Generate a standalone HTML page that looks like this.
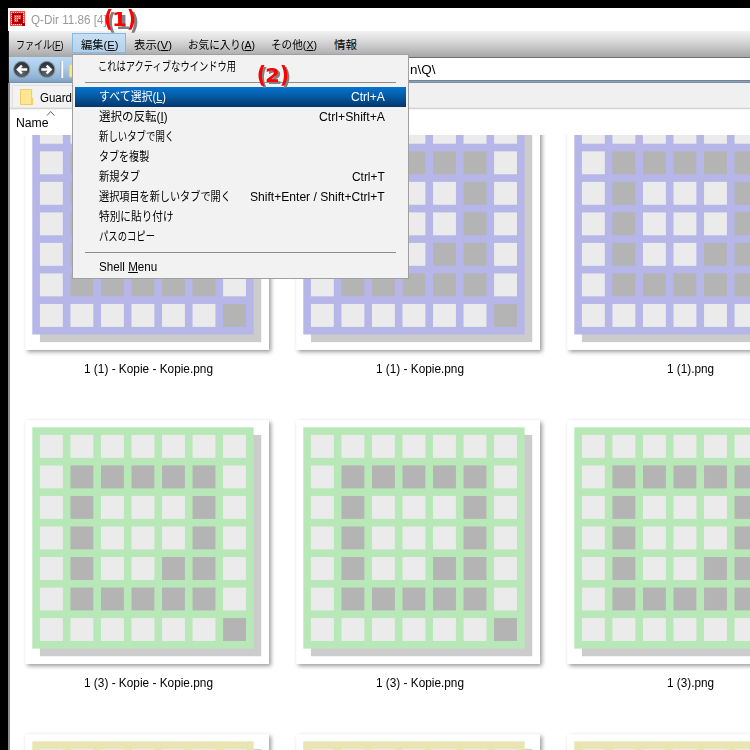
<!DOCTYPE html>
<html lang="ja"><head><meta charset="utf-8"><title>Q-Dir</title>
<style>
html,body{margin:0;padding:0}
body{width:750px;height:750px;overflow:hidden;background:#fff;position:relative;font-family:"Liberation Sans", "Noto Sans CJK JP", sans-serif;font-size:12px}
.a{position:absolute}
.t{position:absolute;white-space:nowrap;line-height:16px;height:16px;transform-origin:0 50%;display:block}
.t u{text-decoration:underline;text-underline-offset:1px}
.fr{position:absolute;width:243.3px;height:243.6px;background:#fff;border-left:1px solid #f0f0f0;border-top:1px solid #f0f0f0;box-shadow:1.5px 1.5px 2.5px rgba(0,0,0,.42)}
.th{position:absolute}
.big .p{display:inline-block;transform:scale(1.08,1.2);transform-origin:50% 62%}
.big .d{display:inline-block;transform:scale(1.13,1.04);transform-origin:50% 75%}
.big{position:absolute;letter-spacing:.6px;font-family:"DejaVu Sans","Liberation Sans",sans-serif;font-weight:bold;font-size:19px;line-height:24px;white-space:nowrap;color:#f00;text-shadow:3px 3px 0 #808080}
</style></head><body>
<!-- title bar -->
<div class="a" style="left:8px;top:8px;width:742px;height:23px;background:#fff"></div>
<svg style="position:absolute;left:10px;top:11px" width="16" height="16" viewBox="0 0 16 16" shape-rendering="crispEdges"><rect x="0" y="0" width="15" height="15" fill="#ff4646"/><rect x="2" y="2" width="11" height="11" fill="#b00000"/><rect x="4" y="4" width="7" height="7" fill="#ff4646"/><rect x="8" y="8" width="3" height="3" fill="#b00000"/><rect x="12" y="12" width="3" height="3" fill="#b00000"/><rect x="1" y="1" width="1" height="1" fill="#fff"/><rect x="3" y="1" width="1" height="1" fill="#fff"/><rect x="5" y="1" width="1" height="1" fill="#fff"/><rect x="7" y="1" width="1" height="1" fill="#fff"/><rect x="9" y="1" width="1" height="1" fill="#fff"/><rect x="11" y="1" width="1" height="1" fill="#fff"/><rect x="13" y="1" width="1" height="1" fill="#fff"/><rect x="1" y="3" width="1" height="1" fill="#fff"/><rect x="3" y="3" width="1" height="1" fill="#000"/><rect x="5" y="3" width="1" height="1" fill="#000"/><rect x="7" y="3" width="1" height="1" fill="#000"/><rect x="9" y="3" width="1" height="1" fill="#000"/><rect x="11" y="3" width="1" height="1" fill="#000"/><rect x="13" y="3" width="1" height="1" fill="#fff"/><rect x="1" y="5" width="1" height="1" fill="#fff"/><rect x="3" y="5" width="1" height="1" fill="#000"/><rect x="5" y="5" width="1" height="1" fill="#fff"/><rect x="7" y="5" width="1" height="1" fill="#fff"/><rect x="9" y="5" width="1" height="1" fill="#fff"/><rect x="11" y="5" width="1" height="1" fill="#000"/><rect x="13" y="5" width="1" height="1" fill="#fff"/><rect x="1" y="7" width="1" height="1" fill="#fff"/><rect x="3" y="7" width="1" height="1" fill="#000"/><rect x="5" y="7" width="1" height="1" fill="#fff"/><rect x="7" y="7" width="1" height="1" fill="#fff"/><rect x="9" y="7" width="1" height="1" fill="#fff"/><rect x="11" y="7" width="1" height="1" fill="#000"/><rect x="13" y="7" width="1" height="1" fill="#fff"/><rect x="1" y="9" width="1" height="1" fill="#fff"/><rect x="3" y="9" width="1" height="1" fill="#000"/><rect x="5" y="9" width="1" height="1" fill="#fff"/><rect x="7" y="9" width="1" height="1" fill="#fff"/><rect x="9" y="9" width="1" height="1" fill="#000"/><rect x="11" y="9" width="1" height="1" fill="#000"/><rect x="13" y="9" width="1" height="1" fill="#fff"/><rect x="1" y="11" width="1" height="1" fill="#fff"/><rect x="3" y="11" width="1" height="1" fill="#000"/><rect x="5" y="11" width="1" height="1" fill="#000"/><rect x="7" y="11" width="1" height="1" fill="#000"/><rect x="9" y="11" width="1" height="1" fill="#000"/><rect x="11" y="11" width="1" height="1" fill="#000"/><rect x="13" y="11" width="1" height="1" fill="#fff"/><rect x="1" y="13" width="1" height="1" fill="#fff"/><rect x="3" y="13" width="1" height="1" fill="#fff"/><rect x="5" y="13" width="1" height="1" fill="#fff"/><rect x="7" y="13" width="1" height="1" fill="#fff"/><rect x="9" y="13" width="1" height="1" fill="#fff"/><rect x="11" y="13" width="1" height="1" fill="#fff"/><rect x="13" y="13" width="1" height="1" fill="#000"/></svg>
<!-- menubar -->
<div class="a" style="left:8px;top:31px;width:742px;height:26px;background:linear-gradient(#f1f1f1 0%,#e0e0e0 28%,#c6c6c6 62%,#a6a6a6 100%)"></div>
<div class="a" style="left:72px;top:33px;width:52px;height:18px;border:1px solid #84b8e8;background:linear-gradient(#c8e0f4,#b4d0ea)"></div>
<!-- toolbar -->
<div class="a" style="left:8px;top:57px;width:742px;height:25.5px;background:linear-gradient(#badaf5 0%,#a9cceb 40%,#8fb3d6 80%,#7f9fbf 96%,#76889c 100%)"></div>
<svg class="a" style="left:9px;top:57px" width="64" height="26" viewBox="0 0 64 26">
 <defs><radialGradient id="bg" cx="50%" cy="75%" r="75%"><stop offset="0" stop-color="#626a72"/><stop offset=".6" stop-color="#3c4248"/><stop offset="1" stop-color="#262b30"/></radialGradient></defs>
 <circle cx="12.7" cy="12.5" r="8.1" fill="url(#bg)" stroke="#88949e" stroke-width="1.1"/>
 <path d="M12.9 8.6 L8.8 12.5 L12.9 16.4 M9.2 12.5 H18.2" fill="none" stroke="#fff" stroke-width="2.3" stroke-linejoin="miter"/>
 <circle cx="37.8" cy="12.5" r="8.1" fill="url(#bg)" stroke="#88949e" stroke-width="1.1"/>
 <path d="M37.6 8.6 L41.7 12.5 L37.6 16.4 M41.3 12.5 H32.3" fill="none" stroke="#fff" stroke-width="2.3" stroke-linejoin="miter"/>
 <rect x="51.6" y="4" width="0.9" height="17" fill="#8a98a8"/><rect x="52.4" y="4" width="1.7" height="17" fill="#fff"/>
 <path d="M60.2 9 L61.5 7.3 H66 V20 H60.2 Z" fill="#fbe68e" stroke="#eecb5a" stroke-width=".8"/>
</svg>
<!-- address bar -->
<div class="a" style="left:400px;top:57px;width:350px;height:1px;background:#6e6e6e"></div>
<div class="a" style="left:400px;top:58px;width:350px;height:22.2px;background:#fff"></div>
<div class="a" style="left:400px;top:80.2px;width:350px;height:.9px;background:#7c8288"></div>
<!-- tab bar -->
<div class="a" style="left:9px;top:82.5px;width:741px;height:25.5px;background:#f0f0f0"></div>
<div class="a" style="left:9px;top:107px;width:741px;height:3px;background:linear-gradient(#e6e6e6 0,#e6e6e6 33%,#d6d6d6 33%,#d6d6d6 67%,#f3f3f3 67%)"></div>
<div class="a" style="left:12px;top:85px;width:120px;height:21px;border:1px solid #e0e0e0;border-bottom:none;background:#f2f2f2"></div>
<svg class="a" style="left:20px;top:89px" width="14" height="17" viewBox="0 0 14 17"><path d="M0.5 0.5 H11.6 V9.2 H12.7 V15.5 H0.5 Z" fill="#ffe694" stroke="#f2cc5c" stroke-width="1"/><path d="M11.4 9.2 V15.5" stroke="#f2cc5c" stroke-width=".8" fill="none"/></svg>
<!-- sort arrow -->
<svg class="a" style="left:46px;top:109.5px" width="10" height="7" viewBox="0 0 10 7"><path d="M1 5.5 L4.7 1.5 L8.4 5.5" stroke="#606060" stroke-width="1" fill="none"/></svg>
<!-- list -->
<div class="a" style="left:0;top:135px;width:750px;height:615px;overflow:hidden">
<svg class="a" style="left:0;top:0" width="750" height="615" viewBox="0 135 750 615"><defs><filter id="ds" x="-5%" y="-5%" width="112%" height="112%"><feDropShadow dx="2" dy="2" stdDeviation="1.9" flood-color="#000" flood-opacity=".4"/></filter></defs><rect x="25.30" y="106.10" width="243.70000000000002" height="243.8" fill="#fff" filter="url(#ds)"/><rect x="39.93" y="120.83" width="221.30" height="221.30" fill="#cccccc"/><rect x="32.30" y="113.20" width="221.30" height="221.30" fill="#b6b6e8"/><rect x="39.93" y="120.83" width="22.89" height="22.89" fill="#ebebeb"/><rect x="70.45" y="120.83" width="22.89" height="22.89" fill="#ebebeb"/><rect x="100.98" y="120.83" width="22.89" height="22.89" fill="#ebebeb"/><rect x="131.50" y="120.83" width="22.89" height="22.89" fill="#ebebeb"/><rect x="162.03" y="120.83" width="22.89" height="22.89" fill="#ebebeb"/><rect x="192.55" y="120.83" width="22.89" height="22.89" fill="#ebebeb"/><rect x="223.07" y="120.83" width="22.89" height="22.89" fill="#ebebeb"/><rect x="39.93" y="151.36" width="22.89" height="22.89" fill="#ebebeb"/><rect x="70.45" y="151.36" width="22.89" height="22.89" fill="#b4b4b4"/><rect x="100.98" y="151.36" width="22.89" height="22.89" fill="#b4b4b4"/><rect x="131.50" y="151.36" width="22.89" height="22.89" fill="#b4b4b4"/><rect x="162.03" y="151.36" width="22.89" height="22.89" fill="#b4b4b4"/><rect x="192.55" y="151.36" width="22.89" height="22.89" fill="#b4b4b4"/><rect x="223.07" y="151.36" width="22.89" height="22.89" fill="#ebebeb"/><rect x="39.93" y="181.88" width="22.89" height="22.89" fill="#ebebeb"/><rect x="70.45" y="181.88" width="22.89" height="22.89" fill="#b4b4b4"/><rect x="100.98" y="181.88" width="22.89" height="22.89" fill="#ebebeb"/><rect x="131.50" y="181.88" width="22.89" height="22.89" fill="#ebebeb"/><rect x="162.03" y="181.88" width="22.89" height="22.89" fill="#ebebeb"/><rect x="192.55" y="181.88" width="22.89" height="22.89" fill="#b4b4b4"/><rect x="223.07" y="181.88" width="22.89" height="22.89" fill="#ebebeb"/><rect x="39.93" y="212.40" width="22.89" height="22.89" fill="#ebebeb"/><rect x="70.45" y="212.40" width="22.89" height="22.89" fill="#b4b4b4"/><rect x="100.98" y="212.40" width="22.89" height="22.89" fill="#ebebeb"/><rect x="131.50" y="212.40" width="22.89" height="22.89" fill="#ebebeb"/><rect x="162.03" y="212.40" width="22.89" height="22.89" fill="#ebebeb"/><rect x="192.55" y="212.40" width="22.89" height="22.89" fill="#b4b4b4"/><rect x="223.07" y="212.40" width="22.89" height="22.89" fill="#ebebeb"/><rect x="39.93" y="242.93" width="22.89" height="22.89" fill="#ebebeb"/><rect x="70.45" y="242.93" width="22.89" height="22.89" fill="#b4b4b4"/><rect x="100.98" y="242.93" width="22.89" height="22.89" fill="#ebebeb"/><rect x="131.50" y="242.93" width="22.89" height="22.89" fill="#ebebeb"/><rect x="162.03" y="242.93" width="22.89" height="22.89" fill="#b4b4b4"/><rect x="192.55" y="242.93" width="22.89" height="22.89" fill="#b4b4b4"/><rect x="223.07" y="242.93" width="22.89" height="22.89" fill="#ebebeb"/><rect x="39.93" y="273.45" width="22.89" height="22.89" fill="#ebebeb"/><rect x="70.45" y="273.45" width="22.89" height="22.89" fill="#b4b4b4"/><rect x="100.98" y="273.45" width="22.89" height="22.89" fill="#b4b4b4"/><rect x="131.50" y="273.45" width="22.89" height="22.89" fill="#b4b4b4"/><rect x="162.03" y="273.45" width="22.89" height="22.89" fill="#b4b4b4"/><rect x="192.55" y="273.45" width="22.89" height="22.89" fill="#b4b4b4"/><rect x="223.07" y="273.45" width="22.89" height="22.89" fill="#ebebeb"/><rect x="39.93" y="303.98" width="22.89" height="22.89" fill="#ebebeb"/><rect x="70.45" y="303.98" width="22.89" height="22.89" fill="#ebebeb"/><rect x="100.98" y="303.98" width="22.89" height="22.89" fill="#ebebeb"/><rect x="131.50" y="303.98" width="22.89" height="22.89" fill="#ebebeb"/><rect x="162.03" y="303.98" width="22.89" height="22.89" fill="#ebebeb"/><rect x="192.55" y="303.98" width="22.89" height="22.89" fill="#ebebeb"/><rect x="223.07" y="303.98" width="22.89" height="22.89" fill="#b4b4b4"/>
<rect x="296.30" y="106.10" width="243.70000000000002" height="243.8" fill="#fff" filter="url(#ds)"/><rect x="310.93" y="120.83" width="221.30" height="221.30" fill="#cccccc"/><rect x="303.30" y="113.20" width="221.30" height="221.30" fill="#b6b6e8"/><rect x="310.93" y="120.83" width="22.89" height="22.89" fill="#ebebeb"/><rect x="341.46" y="120.83" width="22.89" height="22.89" fill="#ebebeb"/><rect x="371.98" y="120.83" width="22.89" height="22.89" fill="#ebebeb"/><rect x="402.50" y="120.83" width="22.89" height="22.89" fill="#ebebeb"/><rect x="433.03" y="120.83" width="22.89" height="22.89" fill="#ebebeb"/><rect x="463.55" y="120.83" width="22.89" height="22.89" fill="#ebebeb"/><rect x="494.08" y="120.83" width="22.89" height="22.89" fill="#ebebeb"/><rect x="310.93" y="151.36" width="22.89" height="22.89" fill="#ebebeb"/><rect x="341.46" y="151.36" width="22.89" height="22.89" fill="#b4b4b4"/><rect x="371.98" y="151.36" width="22.89" height="22.89" fill="#b4b4b4"/><rect x="402.50" y="151.36" width="22.89" height="22.89" fill="#b4b4b4"/><rect x="433.03" y="151.36" width="22.89" height="22.89" fill="#b4b4b4"/><rect x="463.55" y="151.36" width="22.89" height="22.89" fill="#b4b4b4"/><rect x="494.08" y="151.36" width="22.89" height="22.89" fill="#ebebeb"/><rect x="310.93" y="181.88" width="22.89" height="22.89" fill="#ebebeb"/><rect x="341.46" y="181.88" width="22.89" height="22.89" fill="#b4b4b4"/><rect x="371.98" y="181.88" width="22.89" height="22.89" fill="#ebebeb"/><rect x="402.50" y="181.88" width="22.89" height="22.89" fill="#ebebeb"/><rect x="433.03" y="181.88" width="22.89" height="22.89" fill="#ebebeb"/><rect x="463.55" y="181.88" width="22.89" height="22.89" fill="#b4b4b4"/><rect x="494.08" y="181.88" width="22.89" height="22.89" fill="#ebebeb"/><rect x="310.93" y="212.40" width="22.89" height="22.89" fill="#ebebeb"/><rect x="341.46" y="212.40" width="22.89" height="22.89" fill="#b4b4b4"/><rect x="371.98" y="212.40" width="22.89" height="22.89" fill="#ebebeb"/><rect x="402.50" y="212.40" width="22.89" height="22.89" fill="#ebebeb"/><rect x="433.03" y="212.40" width="22.89" height="22.89" fill="#ebebeb"/><rect x="463.55" y="212.40" width="22.89" height="22.89" fill="#b4b4b4"/><rect x="494.08" y="212.40" width="22.89" height="22.89" fill="#ebebeb"/><rect x="310.93" y="242.93" width="22.89" height="22.89" fill="#ebebeb"/><rect x="341.46" y="242.93" width="22.89" height="22.89" fill="#b4b4b4"/><rect x="371.98" y="242.93" width="22.89" height="22.89" fill="#ebebeb"/><rect x="402.50" y="242.93" width="22.89" height="22.89" fill="#ebebeb"/><rect x="433.03" y="242.93" width="22.89" height="22.89" fill="#b4b4b4"/><rect x="463.55" y="242.93" width="22.89" height="22.89" fill="#b4b4b4"/><rect x="494.08" y="242.93" width="22.89" height="22.89" fill="#ebebeb"/><rect x="310.93" y="273.45" width="22.89" height="22.89" fill="#ebebeb"/><rect x="341.46" y="273.45" width="22.89" height="22.89" fill="#b4b4b4"/><rect x="371.98" y="273.45" width="22.89" height="22.89" fill="#b4b4b4"/><rect x="402.50" y="273.45" width="22.89" height="22.89" fill="#b4b4b4"/><rect x="433.03" y="273.45" width="22.89" height="22.89" fill="#b4b4b4"/><rect x="463.55" y="273.45" width="22.89" height="22.89" fill="#b4b4b4"/><rect x="494.08" y="273.45" width="22.89" height="22.89" fill="#ebebeb"/><rect x="310.93" y="303.98" width="22.89" height="22.89" fill="#ebebeb"/><rect x="341.46" y="303.98" width="22.89" height="22.89" fill="#ebebeb"/><rect x="371.98" y="303.98" width="22.89" height="22.89" fill="#ebebeb"/><rect x="402.50" y="303.98" width="22.89" height="22.89" fill="#ebebeb"/><rect x="433.03" y="303.98" width="22.89" height="22.89" fill="#ebebeb"/><rect x="463.55" y="303.98" width="22.89" height="22.89" fill="#ebebeb"/><rect x="494.08" y="303.98" width="22.89" height="22.89" fill="#b4b4b4"/>
<rect x="567.30" y="106.10" width="243.70000000000002" height="243.8" fill="#fff" filter="url(#ds)"/><rect x="581.93" y="120.83" width="221.30" height="221.30" fill="#cccccc"/><rect x="574.30" y="113.20" width="221.30" height="221.30" fill="#b6b6e8"/><rect x="581.93" y="120.83" width="22.89" height="22.89" fill="#ebebeb"/><rect x="612.45" y="120.83" width="22.89" height="22.89" fill="#ebebeb"/><rect x="642.98" y="120.83" width="22.89" height="22.89" fill="#ebebeb"/><rect x="673.50" y="120.83" width="22.89" height="22.89" fill="#ebebeb"/><rect x="704.03" y="120.83" width="22.89" height="22.89" fill="#ebebeb"/><rect x="734.55" y="120.83" width="22.89" height="22.89" fill="#ebebeb"/><rect x="765.07" y="120.83" width="22.89" height="22.89" fill="#ebebeb"/><rect x="581.93" y="151.36" width="22.89" height="22.89" fill="#ebebeb"/><rect x="612.45" y="151.36" width="22.89" height="22.89" fill="#b4b4b4"/><rect x="642.98" y="151.36" width="22.89" height="22.89" fill="#b4b4b4"/><rect x="673.50" y="151.36" width="22.89" height="22.89" fill="#b4b4b4"/><rect x="704.03" y="151.36" width="22.89" height="22.89" fill="#b4b4b4"/><rect x="734.55" y="151.36" width="22.89" height="22.89" fill="#b4b4b4"/><rect x="765.07" y="151.36" width="22.89" height="22.89" fill="#ebebeb"/><rect x="581.93" y="181.88" width="22.89" height="22.89" fill="#ebebeb"/><rect x="612.45" y="181.88" width="22.89" height="22.89" fill="#b4b4b4"/><rect x="642.98" y="181.88" width="22.89" height="22.89" fill="#ebebeb"/><rect x="673.50" y="181.88" width="22.89" height="22.89" fill="#ebebeb"/><rect x="704.03" y="181.88" width="22.89" height="22.89" fill="#ebebeb"/><rect x="734.55" y="181.88" width="22.89" height="22.89" fill="#b4b4b4"/><rect x="765.07" y="181.88" width="22.89" height="22.89" fill="#ebebeb"/><rect x="581.93" y="212.40" width="22.89" height="22.89" fill="#ebebeb"/><rect x="612.45" y="212.40" width="22.89" height="22.89" fill="#b4b4b4"/><rect x="642.98" y="212.40" width="22.89" height="22.89" fill="#ebebeb"/><rect x="673.50" y="212.40" width="22.89" height="22.89" fill="#ebebeb"/><rect x="704.03" y="212.40" width="22.89" height="22.89" fill="#ebebeb"/><rect x="734.55" y="212.40" width="22.89" height="22.89" fill="#b4b4b4"/><rect x="765.07" y="212.40" width="22.89" height="22.89" fill="#ebebeb"/><rect x="581.93" y="242.93" width="22.89" height="22.89" fill="#ebebeb"/><rect x="612.45" y="242.93" width="22.89" height="22.89" fill="#b4b4b4"/><rect x="642.98" y="242.93" width="22.89" height="22.89" fill="#ebebeb"/><rect x="673.50" y="242.93" width="22.89" height="22.89" fill="#ebebeb"/><rect x="704.03" y="242.93" width="22.89" height="22.89" fill="#b4b4b4"/><rect x="734.55" y="242.93" width="22.89" height="22.89" fill="#b4b4b4"/><rect x="765.07" y="242.93" width="22.89" height="22.89" fill="#ebebeb"/><rect x="581.93" y="273.45" width="22.89" height="22.89" fill="#ebebeb"/><rect x="612.45" y="273.45" width="22.89" height="22.89" fill="#b4b4b4"/><rect x="642.98" y="273.45" width="22.89" height="22.89" fill="#b4b4b4"/><rect x="673.50" y="273.45" width="22.89" height="22.89" fill="#b4b4b4"/><rect x="704.03" y="273.45" width="22.89" height="22.89" fill="#b4b4b4"/><rect x="734.55" y="273.45" width="22.89" height="22.89" fill="#b4b4b4"/><rect x="765.07" y="273.45" width="22.89" height="22.89" fill="#ebebeb"/><rect x="581.93" y="303.98" width="22.89" height="22.89" fill="#ebebeb"/><rect x="612.45" y="303.98" width="22.89" height="22.89" fill="#ebebeb"/><rect x="642.98" y="303.98" width="22.89" height="22.89" fill="#ebebeb"/><rect x="673.50" y="303.98" width="22.89" height="22.89" fill="#ebebeb"/><rect x="704.03" y="303.98" width="22.89" height="22.89" fill="#ebebeb"/><rect x="734.55" y="303.98" width="22.89" height="22.89" fill="#ebebeb"/><rect x="765.07" y="303.98" width="22.89" height="22.89" fill="#b4b4b4"/>
<rect x="25.30" y="420.20" width="243.70000000000002" height="243.8" fill="#fff" filter="url(#ds)"/><rect x="39.93" y="434.93" width="221.30" height="221.30" fill="#cccccc"/><rect x="32.30" y="427.30" width="221.30" height="221.30" fill="#b8e8b8"/><rect x="39.93" y="434.93" width="22.89" height="22.89" fill="#ebebeb"/><rect x="70.45" y="434.93" width="22.89" height="22.89" fill="#ebebeb"/><rect x="100.98" y="434.93" width="22.89" height="22.89" fill="#ebebeb"/><rect x="131.50" y="434.93" width="22.89" height="22.89" fill="#ebebeb"/><rect x="162.03" y="434.93" width="22.89" height="22.89" fill="#ebebeb"/><rect x="192.55" y="434.93" width="22.89" height="22.89" fill="#ebebeb"/><rect x="223.07" y="434.93" width="22.89" height="22.89" fill="#ebebeb"/><rect x="39.93" y="465.46" width="22.89" height="22.89" fill="#ebebeb"/><rect x="70.45" y="465.46" width="22.89" height="22.89" fill="#b4b4b4"/><rect x="100.98" y="465.46" width="22.89" height="22.89" fill="#b4b4b4"/><rect x="131.50" y="465.46" width="22.89" height="22.89" fill="#b4b4b4"/><rect x="162.03" y="465.46" width="22.89" height="22.89" fill="#b4b4b4"/><rect x="192.55" y="465.46" width="22.89" height="22.89" fill="#b4b4b4"/><rect x="223.07" y="465.46" width="22.89" height="22.89" fill="#ebebeb"/><rect x="39.93" y="495.98" width="22.89" height="22.89" fill="#ebebeb"/><rect x="70.45" y="495.98" width="22.89" height="22.89" fill="#b4b4b4"/><rect x="100.98" y="495.98" width="22.89" height="22.89" fill="#ebebeb"/><rect x="131.50" y="495.98" width="22.89" height="22.89" fill="#ebebeb"/><rect x="162.03" y="495.98" width="22.89" height="22.89" fill="#ebebeb"/><rect x="192.55" y="495.98" width="22.89" height="22.89" fill="#b4b4b4"/><rect x="223.07" y="495.98" width="22.89" height="22.89" fill="#ebebeb"/><rect x="39.93" y="526.50" width="22.89" height="22.89" fill="#ebebeb"/><rect x="70.45" y="526.50" width="22.89" height="22.89" fill="#b4b4b4"/><rect x="100.98" y="526.50" width="22.89" height="22.89" fill="#ebebeb"/><rect x="131.50" y="526.50" width="22.89" height="22.89" fill="#ebebeb"/><rect x="162.03" y="526.50" width="22.89" height="22.89" fill="#ebebeb"/><rect x="192.55" y="526.50" width="22.89" height="22.89" fill="#b4b4b4"/><rect x="223.07" y="526.50" width="22.89" height="22.89" fill="#ebebeb"/><rect x="39.93" y="557.03" width="22.89" height="22.89" fill="#ebebeb"/><rect x="70.45" y="557.03" width="22.89" height="22.89" fill="#b4b4b4"/><rect x="100.98" y="557.03" width="22.89" height="22.89" fill="#ebebeb"/><rect x="131.50" y="557.03" width="22.89" height="22.89" fill="#ebebeb"/><rect x="162.03" y="557.03" width="22.89" height="22.89" fill="#b4b4b4"/><rect x="192.55" y="557.03" width="22.89" height="22.89" fill="#b4b4b4"/><rect x="223.07" y="557.03" width="22.89" height="22.89" fill="#ebebeb"/><rect x="39.93" y="587.55" width="22.89" height="22.89" fill="#ebebeb"/><rect x="70.45" y="587.55" width="22.89" height="22.89" fill="#b4b4b4"/><rect x="100.98" y="587.55" width="22.89" height="22.89" fill="#b4b4b4"/><rect x="131.50" y="587.55" width="22.89" height="22.89" fill="#b4b4b4"/><rect x="162.03" y="587.55" width="22.89" height="22.89" fill="#b4b4b4"/><rect x="192.55" y="587.55" width="22.89" height="22.89" fill="#b4b4b4"/><rect x="223.07" y="587.55" width="22.89" height="22.89" fill="#ebebeb"/><rect x="39.93" y="618.08" width="22.89" height="22.89" fill="#ebebeb"/><rect x="70.45" y="618.08" width="22.89" height="22.89" fill="#ebebeb"/><rect x="100.98" y="618.08" width="22.89" height="22.89" fill="#ebebeb"/><rect x="131.50" y="618.08" width="22.89" height="22.89" fill="#ebebeb"/><rect x="162.03" y="618.08" width="22.89" height="22.89" fill="#ebebeb"/><rect x="192.55" y="618.08" width="22.89" height="22.89" fill="#ebebeb"/><rect x="223.07" y="618.08" width="22.89" height="22.89" fill="#b4b4b4"/>
<rect x="296.30" y="420.20" width="243.70000000000002" height="243.8" fill="#fff" filter="url(#ds)"/><rect x="310.93" y="434.93" width="221.30" height="221.30" fill="#cccccc"/><rect x="303.30" y="427.30" width="221.30" height="221.30" fill="#b8e8b8"/><rect x="310.93" y="434.93" width="22.89" height="22.89" fill="#ebebeb"/><rect x="341.46" y="434.93" width="22.89" height="22.89" fill="#ebebeb"/><rect x="371.98" y="434.93" width="22.89" height="22.89" fill="#ebebeb"/><rect x="402.50" y="434.93" width="22.89" height="22.89" fill="#ebebeb"/><rect x="433.03" y="434.93" width="22.89" height="22.89" fill="#ebebeb"/><rect x="463.55" y="434.93" width="22.89" height="22.89" fill="#ebebeb"/><rect x="494.08" y="434.93" width="22.89" height="22.89" fill="#ebebeb"/><rect x="310.93" y="465.46" width="22.89" height="22.89" fill="#ebebeb"/><rect x="341.46" y="465.46" width="22.89" height="22.89" fill="#b4b4b4"/><rect x="371.98" y="465.46" width="22.89" height="22.89" fill="#b4b4b4"/><rect x="402.50" y="465.46" width="22.89" height="22.89" fill="#b4b4b4"/><rect x="433.03" y="465.46" width="22.89" height="22.89" fill="#b4b4b4"/><rect x="463.55" y="465.46" width="22.89" height="22.89" fill="#b4b4b4"/><rect x="494.08" y="465.46" width="22.89" height="22.89" fill="#ebebeb"/><rect x="310.93" y="495.98" width="22.89" height="22.89" fill="#ebebeb"/><rect x="341.46" y="495.98" width="22.89" height="22.89" fill="#b4b4b4"/><rect x="371.98" y="495.98" width="22.89" height="22.89" fill="#ebebeb"/><rect x="402.50" y="495.98" width="22.89" height="22.89" fill="#ebebeb"/><rect x="433.03" y="495.98" width="22.89" height="22.89" fill="#ebebeb"/><rect x="463.55" y="495.98" width="22.89" height="22.89" fill="#b4b4b4"/><rect x="494.08" y="495.98" width="22.89" height="22.89" fill="#ebebeb"/><rect x="310.93" y="526.50" width="22.89" height="22.89" fill="#ebebeb"/><rect x="341.46" y="526.50" width="22.89" height="22.89" fill="#b4b4b4"/><rect x="371.98" y="526.50" width="22.89" height="22.89" fill="#ebebeb"/><rect x="402.50" y="526.50" width="22.89" height="22.89" fill="#ebebeb"/><rect x="433.03" y="526.50" width="22.89" height="22.89" fill="#ebebeb"/><rect x="463.55" y="526.50" width="22.89" height="22.89" fill="#b4b4b4"/><rect x="494.08" y="526.50" width="22.89" height="22.89" fill="#ebebeb"/><rect x="310.93" y="557.03" width="22.89" height="22.89" fill="#ebebeb"/><rect x="341.46" y="557.03" width="22.89" height="22.89" fill="#b4b4b4"/><rect x="371.98" y="557.03" width="22.89" height="22.89" fill="#ebebeb"/><rect x="402.50" y="557.03" width="22.89" height="22.89" fill="#ebebeb"/><rect x="433.03" y="557.03" width="22.89" height="22.89" fill="#b4b4b4"/><rect x="463.55" y="557.03" width="22.89" height="22.89" fill="#b4b4b4"/><rect x="494.08" y="557.03" width="22.89" height="22.89" fill="#ebebeb"/><rect x="310.93" y="587.55" width="22.89" height="22.89" fill="#ebebeb"/><rect x="341.46" y="587.55" width="22.89" height="22.89" fill="#b4b4b4"/><rect x="371.98" y="587.55" width="22.89" height="22.89" fill="#b4b4b4"/><rect x="402.50" y="587.55" width="22.89" height="22.89" fill="#b4b4b4"/><rect x="433.03" y="587.55" width="22.89" height="22.89" fill="#b4b4b4"/><rect x="463.55" y="587.55" width="22.89" height="22.89" fill="#b4b4b4"/><rect x="494.08" y="587.55" width="22.89" height="22.89" fill="#ebebeb"/><rect x="310.93" y="618.08" width="22.89" height="22.89" fill="#ebebeb"/><rect x="341.46" y="618.08" width="22.89" height="22.89" fill="#ebebeb"/><rect x="371.98" y="618.08" width="22.89" height="22.89" fill="#ebebeb"/><rect x="402.50" y="618.08" width="22.89" height="22.89" fill="#ebebeb"/><rect x="433.03" y="618.08" width="22.89" height="22.89" fill="#ebebeb"/><rect x="463.55" y="618.08" width="22.89" height="22.89" fill="#ebebeb"/><rect x="494.08" y="618.08" width="22.89" height="22.89" fill="#b4b4b4"/>
<rect x="567.30" y="420.20" width="243.70000000000002" height="243.8" fill="#fff" filter="url(#ds)"/><rect x="581.93" y="434.93" width="221.30" height="221.30" fill="#cccccc"/><rect x="574.30" y="427.30" width="221.30" height="221.30" fill="#b8e8b8"/><rect x="581.93" y="434.93" width="22.89" height="22.89" fill="#ebebeb"/><rect x="612.45" y="434.93" width="22.89" height="22.89" fill="#ebebeb"/><rect x="642.98" y="434.93" width="22.89" height="22.89" fill="#ebebeb"/><rect x="673.50" y="434.93" width="22.89" height="22.89" fill="#ebebeb"/><rect x="704.03" y="434.93" width="22.89" height="22.89" fill="#ebebeb"/><rect x="734.55" y="434.93" width="22.89" height="22.89" fill="#ebebeb"/><rect x="765.07" y="434.93" width="22.89" height="22.89" fill="#ebebeb"/><rect x="581.93" y="465.46" width="22.89" height="22.89" fill="#ebebeb"/><rect x="612.45" y="465.46" width="22.89" height="22.89" fill="#b4b4b4"/><rect x="642.98" y="465.46" width="22.89" height="22.89" fill="#b4b4b4"/><rect x="673.50" y="465.46" width="22.89" height="22.89" fill="#b4b4b4"/><rect x="704.03" y="465.46" width="22.89" height="22.89" fill="#b4b4b4"/><rect x="734.55" y="465.46" width="22.89" height="22.89" fill="#b4b4b4"/><rect x="765.07" y="465.46" width="22.89" height="22.89" fill="#ebebeb"/><rect x="581.93" y="495.98" width="22.89" height="22.89" fill="#ebebeb"/><rect x="612.45" y="495.98" width="22.89" height="22.89" fill="#b4b4b4"/><rect x="642.98" y="495.98" width="22.89" height="22.89" fill="#ebebeb"/><rect x="673.50" y="495.98" width="22.89" height="22.89" fill="#ebebeb"/><rect x="704.03" y="495.98" width="22.89" height="22.89" fill="#ebebeb"/><rect x="734.55" y="495.98" width="22.89" height="22.89" fill="#b4b4b4"/><rect x="765.07" y="495.98" width="22.89" height="22.89" fill="#ebebeb"/><rect x="581.93" y="526.50" width="22.89" height="22.89" fill="#ebebeb"/><rect x="612.45" y="526.50" width="22.89" height="22.89" fill="#b4b4b4"/><rect x="642.98" y="526.50" width="22.89" height="22.89" fill="#ebebeb"/><rect x="673.50" y="526.50" width="22.89" height="22.89" fill="#ebebeb"/><rect x="704.03" y="526.50" width="22.89" height="22.89" fill="#ebebeb"/><rect x="734.55" y="526.50" width="22.89" height="22.89" fill="#b4b4b4"/><rect x="765.07" y="526.50" width="22.89" height="22.89" fill="#ebebeb"/><rect x="581.93" y="557.03" width="22.89" height="22.89" fill="#ebebeb"/><rect x="612.45" y="557.03" width="22.89" height="22.89" fill="#b4b4b4"/><rect x="642.98" y="557.03" width="22.89" height="22.89" fill="#ebebeb"/><rect x="673.50" y="557.03" width="22.89" height="22.89" fill="#ebebeb"/><rect x="704.03" y="557.03" width="22.89" height="22.89" fill="#b4b4b4"/><rect x="734.55" y="557.03" width="22.89" height="22.89" fill="#b4b4b4"/><rect x="765.07" y="557.03" width="22.89" height="22.89" fill="#ebebeb"/><rect x="581.93" y="587.55" width="22.89" height="22.89" fill="#ebebeb"/><rect x="612.45" y="587.55" width="22.89" height="22.89" fill="#b4b4b4"/><rect x="642.98" y="587.55" width="22.89" height="22.89" fill="#b4b4b4"/><rect x="673.50" y="587.55" width="22.89" height="22.89" fill="#b4b4b4"/><rect x="704.03" y="587.55" width="22.89" height="22.89" fill="#b4b4b4"/><rect x="734.55" y="587.55" width="22.89" height="22.89" fill="#b4b4b4"/><rect x="765.07" y="587.55" width="22.89" height="22.89" fill="#ebebeb"/><rect x="581.93" y="618.08" width="22.89" height="22.89" fill="#ebebeb"/><rect x="612.45" y="618.08" width="22.89" height="22.89" fill="#ebebeb"/><rect x="642.98" y="618.08" width="22.89" height="22.89" fill="#ebebeb"/><rect x="673.50" y="618.08" width="22.89" height="22.89" fill="#ebebeb"/><rect x="704.03" y="618.08" width="22.89" height="22.89" fill="#ebebeb"/><rect x="734.55" y="618.08" width="22.89" height="22.89" fill="#ebebeb"/><rect x="765.07" y="618.08" width="22.89" height="22.89" fill="#b4b4b4"/>
<rect x="25.30" y="734.20" width="243.70000000000002" height="243.8" fill="#fff" filter="url(#ds)"/><rect x="39.93" y="748.93" width="221.30" height="221.30" fill="#cccccc"/><rect x="32.30" y="741.30" width="221.30" height="221.30" fill="#e8e4b4"/><rect x="39.93" y="748.93" width="22.89" height="22.89" fill="#ebebeb"/><rect x="70.45" y="748.93" width="22.89" height="22.89" fill="#ebebeb"/><rect x="100.98" y="748.93" width="22.89" height="22.89" fill="#ebebeb"/><rect x="131.50" y="748.93" width="22.89" height="22.89" fill="#ebebeb"/><rect x="162.03" y="748.93" width="22.89" height="22.89" fill="#ebebeb"/><rect x="192.55" y="748.93" width="22.89" height="22.89" fill="#ebebeb"/><rect x="223.07" y="748.93" width="22.89" height="22.89" fill="#ebebeb"/><rect x="39.93" y="779.45" width="22.89" height="22.89" fill="#ebebeb"/><rect x="70.45" y="779.45" width="22.89" height="22.89" fill="#b4b4b4"/><rect x="100.98" y="779.45" width="22.89" height="22.89" fill="#b4b4b4"/><rect x="131.50" y="779.45" width="22.89" height="22.89" fill="#b4b4b4"/><rect x="162.03" y="779.45" width="22.89" height="22.89" fill="#b4b4b4"/><rect x="192.55" y="779.45" width="22.89" height="22.89" fill="#b4b4b4"/><rect x="223.07" y="779.45" width="22.89" height="22.89" fill="#ebebeb"/><rect x="39.93" y="809.98" width="22.89" height="22.89" fill="#ebebeb"/><rect x="70.45" y="809.98" width="22.89" height="22.89" fill="#b4b4b4"/><rect x="100.98" y="809.98" width="22.89" height="22.89" fill="#ebebeb"/><rect x="131.50" y="809.98" width="22.89" height="22.89" fill="#ebebeb"/><rect x="162.03" y="809.98" width="22.89" height="22.89" fill="#ebebeb"/><rect x="192.55" y="809.98" width="22.89" height="22.89" fill="#b4b4b4"/><rect x="223.07" y="809.98" width="22.89" height="22.89" fill="#ebebeb"/><rect x="39.93" y="840.50" width="22.89" height="22.89" fill="#ebebeb"/><rect x="70.45" y="840.50" width="22.89" height="22.89" fill="#b4b4b4"/><rect x="100.98" y="840.50" width="22.89" height="22.89" fill="#ebebeb"/><rect x="131.50" y="840.50" width="22.89" height="22.89" fill="#ebebeb"/><rect x="162.03" y="840.50" width="22.89" height="22.89" fill="#ebebeb"/><rect x="192.55" y="840.50" width="22.89" height="22.89" fill="#b4b4b4"/><rect x="223.07" y="840.50" width="22.89" height="22.89" fill="#ebebeb"/><rect x="39.93" y="871.03" width="22.89" height="22.89" fill="#ebebeb"/><rect x="70.45" y="871.03" width="22.89" height="22.89" fill="#b4b4b4"/><rect x="100.98" y="871.03" width="22.89" height="22.89" fill="#ebebeb"/><rect x="131.50" y="871.03" width="22.89" height="22.89" fill="#ebebeb"/><rect x="162.03" y="871.03" width="22.89" height="22.89" fill="#b4b4b4"/><rect x="192.55" y="871.03" width="22.89" height="22.89" fill="#b4b4b4"/><rect x="223.07" y="871.03" width="22.89" height="22.89" fill="#ebebeb"/><rect x="39.93" y="901.55" width="22.89" height="22.89" fill="#ebebeb"/><rect x="70.45" y="901.55" width="22.89" height="22.89" fill="#b4b4b4"/><rect x="100.98" y="901.55" width="22.89" height="22.89" fill="#b4b4b4"/><rect x="131.50" y="901.55" width="22.89" height="22.89" fill="#b4b4b4"/><rect x="162.03" y="901.55" width="22.89" height="22.89" fill="#b4b4b4"/><rect x="192.55" y="901.55" width="22.89" height="22.89" fill="#b4b4b4"/><rect x="223.07" y="901.55" width="22.89" height="22.89" fill="#ebebeb"/><rect x="39.93" y="932.07" width="22.89" height="22.89" fill="#ebebeb"/><rect x="70.45" y="932.07" width="22.89" height="22.89" fill="#ebebeb"/><rect x="100.98" y="932.07" width="22.89" height="22.89" fill="#ebebeb"/><rect x="131.50" y="932.07" width="22.89" height="22.89" fill="#ebebeb"/><rect x="162.03" y="932.07" width="22.89" height="22.89" fill="#ebebeb"/><rect x="192.55" y="932.07" width="22.89" height="22.89" fill="#ebebeb"/><rect x="223.07" y="932.07" width="22.89" height="22.89" fill="#b4b4b4"/>
<rect x="296.30" y="734.20" width="243.70000000000002" height="243.8" fill="#fff" filter="url(#ds)"/><rect x="310.93" y="748.93" width="221.30" height="221.30" fill="#cccccc"/><rect x="303.30" y="741.30" width="221.30" height="221.30" fill="#e8e4b4"/><rect x="310.93" y="748.93" width="22.89" height="22.89" fill="#ebebeb"/><rect x="341.46" y="748.93" width="22.89" height="22.89" fill="#ebebeb"/><rect x="371.98" y="748.93" width="22.89" height="22.89" fill="#ebebeb"/><rect x="402.50" y="748.93" width="22.89" height="22.89" fill="#ebebeb"/><rect x="433.03" y="748.93" width="22.89" height="22.89" fill="#ebebeb"/><rect x="463.55" y="748.93" width="22.89" height="22.89" fill="#ebebeb"/><rect x="494.08" y="748.93" width="22.89" height="22.89" fill="#ebebeb"/><rect x="310.93" y="779.45" width="22.89" height="22.89" fill="#ebebeb"/><rect x="341.46" y="779.45" width="22.89" height="22.89" fill="#b4b4b4"/><rect x="371.98" y="779.45" width="22.89" height="22.89" fill="#b4b4b4"/><rect x="402.50" y="779.45" width="22.89" height="22.89" fill="#b4b4b4"/><rect x="433.03" y="779.45" width="22.89" height="22.89" fill="#b4b4b4"/><rect x="463.55" y="779.45" width="22.89" height="22.89" fill="#b4b4b4"/><rect x="494.08" y="779.45" width="22.89" height="22.89" fill="#ebebeb"/><rect x="310.93" y="809.98" width="22.89" height="22.89" fill="#ebebeb"/><rect x="341.46" y="809.98" width="22.89" height="22.89" fill="#b4b4b4"/><rect x="371.98" y="809.98" width="22.89" height="22.89" fill="#ebebeb"/><rect x="402.50" y="809.98" width="22.89" height="22.89" fill="#ebebeb"/><rect x="433.03" y="809.98" width="22.89" height="22.89" fill="#ebebeb"/><rect x="463.55" y="809.98" width="22.89" height="22.89" fill="#b4b4b4"/><rect x="494.08" y="809.98" width="22.89" height="22.89" fill="#ebebeb"/><rect x="310.93" y="840.50" width="22.89" height="22.89" fill="#ebebeb"/><rect x="341.46" y="840.50" width="22.89" height="22.89" fill="#b4b4b4"/><rect x="371.98" y="840.50" width="22.89" height="22.89" fill="#ebebeb"/><rect x="402.50" y="840.50" width="22.89" height="22.89" fill="#ebebeb"/><rect x="433.03" y="840.50" width="22.89" height="22.89" fill="#ebebeb"/><rect x="463.55" y="840.50" width="22.89" height="22.89" fill="#b4b4b4"/><rect x="494.08" y="840.50" width="22.89" height="22.89" fill="#ebebeb"/><rect x="310.93" y="871.03" width="22.89" height="22.89" fill="#ebebeb"/><rect x="341.46" y="871.03" width="22.89" height="22.89" fill="#b4b4b4"/><rect x="371.98" y="871.03" width="22.89" height="22.89" fill="#ebebeb"/><rect x="402.50" y="871.03" width="22.89" height="22.89" fill="#ebebeb"/><rect x="433.03" y="871.03" width="22.89" height="22.89" fill="#b4b4b4"/><rect x="463.55" y="871.03" width="22.89" height="22.89" fill="#b4b4b4"/><rect x="494.08" y="871.03" width="22.89" height="22.89" fill="#ebebeb"/><rect x="310.93" y="901.55" width="22.89" height="22.89" fill="#ebebeb"/><rect x="341.46" y="901.55" width="22.89" height="22.89" fill="#b4b4b4"/><rect x="371.98" y="901.55" width="22.89" height="22.89" fill="#b4b4b4"/><rect x="402.50" y="901.55" width="22.89" height="22.89" fill="#b4b4b4"/><rect x="433.03" y="901.55" width="22.89" height="22.89" fill="#b4b4b4"/><rect x="463.55" y="901.55" width="22.89" height="22.89" fill="#b4b4b4"/><rect x="494.08" y="901.55" width="22.89" height="22.89" fill="#ebebeb"/><rect x="310.93" y="932.07" width="22.89" height="22.89" fill="#ebebeb"/><rect x="341.46" y="932.07" width="22.89" height="22.89" fill="#ebebeb"/><rect x="371.98" y="932.07" width="22.89" height="22.89" fill="#ebebeb"/><rect x="402.50" y="932.07" width="22.89" height="22.89" fill="#ebebeb"/><rect x="433.03" y="932.07" width="22.89" height="22.89" fill="#ebebeb"/><rect x="463.55" y="932.07" width="22.89" height="22.89" fill="#ebebeb"/><rect x="494.08" y="932.07" width="22.89" height="22.89" fill="#b4b4b4"/>
<rect x="567.30" y="734.20" width="243.70000000000002" height="243.8" fill="#fff" filter="url(#ds)"/><rect x="581.93" y="748.93" width="221.30" height="221.30" fill="#cccccc"/><rect x="574.30" y="741.30" width="221.30" height="221.30" fill="#e8e4b4"/><rect x="581.93" y="748.93" width="22.89" height="22.89" fill="#ebebeb"/><rect x="612.45" y="748.93" width="22.89" height="22.89" fill="#ebebeb"/><rect x="642.98" y="748.93" width="22.89" height="22.89" fill="#ebebeb"/><rect x="673.50" y="748.93" width="22.89" height="22.89" fill="#ebebeb"/><rect x="704.03" y="748.93" width="22.89" height="22.89" fill="#ebebeb"/><rect x="734.55" y="748.93" width="22.89" height="22.89" fill="#ebebeb"/><rect x="765.07" y="748.93" width="22.89" height="22.89" fill="#ebebeb"/><rect x="581.93" y="779.45" width="22.89" height="22.89" fill="#ebebeb"/><rect x="612.45" y="779.45" width="22.89" height="22.89" fill="#b4b4b4"/><rect x="642.98" y="779.45" width="22.89" height="22.89" fill="#b4b4b4"/><rect x="673.50" y="779.45" width="22.89" height="22.89" fill="#b4b4b4"/><rect x="704.03" y="779.45" width="22.89" height="22.89" fill="#b4b4b4"/><rect x="734.55" y="779.45" width="22.89" height="22.89" fill="#b4b4b4"/><rect x="765.07" y="779.45" width="22.89" height="22.89" fill="#ebebeb"/><rect x="581.93" y="809.98" width="22.89" height="22.89" fill="#ebebeb"/><rect x="612.45" y="809.98" width="22.89" height="22.89" fill="#b4b4b4"/><rect x="642.98" y="809.98" width="22.89" height="22.89" fill="#ebebeb"/><rect x="673.50" y="809.98" width="22.89" height="22.89" fill="#ebebeb"/><rect x="704.03" y="809.98" width="22.89" height="22.89" fill="#ebebeb"/><rect x="734.55" y="809.98" width="22.89" height="22.89" fill="#b4b4b4"/><rect x="765.07" y="809.98" width="22.89" height="22.89" fill="#ebebeb"/><rect x="581.93" y="840.50" width="22.89" height="22.89" fill="#ebebeb"/><rect x="612.45" y="840.50" width="22.89" height="22.89" fill="#b4b4b4"/><rect x="642.98" y="840.50" width="22.89" height="22.89" fill="#ebebeb"/><rect x="673.50" y="840.50" width="22.89" height="22.89" fill="#ebebeb"/><rect x="704.03" y="840.50" width="22.89" height="22.89" fill="#ebebeb"/><rect x="734.55" y="840.50" width="22.89" height="22.89" fill="#b4b4b4"/><rect x="765.07" y="840.50" width="22.89" height="22.89" fill="#ebebeb"/><rect x="581.93" y="871.03" width="22.89" height="22.89" fill="#ebebeb"/><rect x="612.45" y="871.03" width="22.89" height="22.89" fill="#b4b4b4"/><rect x="642.98" y="871.03" width="22.89" height="22.89" fill="#ebebeb"/><rect x="673.50" y="871.03" width="22.89" height="22.89" fill="#ebebeb"/><rect x="704.03" y="871.03" width="22.89" height="22.89" fill="#b4b4b4"/><rect x="734.55" y="871.03" width="22.89" height="22.89" fill="#b4b4b4"/><rect x="765.07" y="871.03" width="22.89" height="22.89" fill="#ebebeb"/><rect x="581.93" y="901.55" width="22.89" height="22.89" fill="#ebebeb"/><rect x="612.45" y="901.55" width="22.89" height="22.89" fill="#b4b4b4"/><rect x="642.98" y="901.55" width="22.89" height="22.89" fill="#b4b4b4"/><rect x="673.50" y="901.55" width="22.89" height="22.89" fill="#b4b4b4"/><rect x="704.03" y="901.55" width="22.89" height="22.89" fill="#b4b4b4"/><rect x="734.55" y="901.55" width="22.89" height="22.89" fill="#b4b4b4"/><rect x="765.07" y="901.55" width="22.89" height="22.89" fill="#ebebeb"/><rect x="581.93" y="932.07" width="22.89" height="22.89" fill="#ebebeb"/><rect x="612.45" y="932.07" width="22.89" height="22.89" fill="#ebebeb"/><rect x="642.98" y="932.07" width="22.89" height="22.89" fill="#ebebeb"/><rect x="673.50" y="932.07" width="22.89" height="22.89" fill="#ebebeb"/><rect x="704.03" y="932.07" width="22.89" height="22.89" fill="#ebebeb"/><rect x="734.55" y="932.07" width="22.89" height="22.89" fill="#ebebeb"/><rect x="765.07" y="932.07" width="22.89" height="22.89" fill="#b4b4b4"/></svg>
</div>
<span class="t" style="left:31.3px;top:11.5px;font-size:12px;color:#999;transform:scaleX(0.9729);">Q-Dir 11.86 [4]</span>
<span class="t" style="left:15.7px;top:36.7px;font-size:11.5px;color:#000;transform:scaleX(0.7839);">ファイル(<u>F</u>)</span>
<span class="t" style="left:81.0px;top:36.7px;font-size:11.5px;color:#000;transform:scaleX(0.9802);">編集(<u>E</u>)</span>
<span class="t" style="left:134.0px;top:36.7px;font-size:11.5px;color:#000;transform:scaleX(0.9906);">表示(<u>V</u>)</span>
<span class="t" style="left:188.0px;top:36.7px;font-size:11.5px;color:#000;transform:scaleX(0.9196);">お気に入り(<u>A</u>)</span>
<span class="t" style="left:271.0px;top:36.7px;font-size:11.5px;color:#000;transform:scaleX(0.9226);">その他(<u>X</u>)</span>
<span class="t" style="left:334.0px;top:36.7px;font-size:11.5px;color:#000;transform:scaleX(1.0000);">情報</span>
<span class="t" style="left:40.3px;top:90.0px;font-size:12px;color:#000;transform:scaleX(0.9593);">Guard</span>
<span class="t" style="left:15.8px;top:114.5px;font-size:12px;color:#000;transform:scaleX(1.0183);">Name</span>
<span class="t" style="left:84.0px;top:360.5px;font-size:12px;color:#000;transform:scaleX(0.9866);">1 (1) - Kopie - Kopie.png</span>
<span class="t" style="left:376.0px;top:360.5px;font-size:12px;color:#000;transform:scaleX(0.9844);">1 (1) - Kopie.png</span>
<span class="t" style="left:667.0px;top:360.5px;font-size:12px;color:#000;transform:scaleX(0.9785);">1 (1).png</span>
<span class="t" style="left:84.0px;top:675.0px;font-size:12px;color:#000;transform:scaleX(0.9866);">1 (3) - Kopie - Kopie.png</span>
<span class="t" style="left:376.0px;top:675.0px;font-size:12px;color:#000;transform:scaleX(0.9844);">1 (3) - Kopie.png</span>
<span class="t" style="left:667.0px;top:675.0px;font-size:12px;color:#000;transform:scaleX(0.9785);">1 (3).png</span>
<!-- popup menu -->
<div class="a" style="left:72px;top:54px;width:335px;height:223px;background:#f2f2f2;border:1px solid #a0a0a0"></div>
<div class="a" style="left:85px;top:81.5px;width:311px;height:1px;background:#8c8c8c"></div>
<div class="a" style="left:85px;top:252px;width:311px;height:1px;background:#8c8c8c"></div>
<div class="a" style="left:75px;top:87px;width:331px;height:20px;background:linear-gradient(#0674d0,#05589f 50%,#02366c)"></div>
<span class="t" style="left:409.6px;top:61.5px;font-size:12px;color:#000;transform:scaleX(1.1196);">n\Q\</span>
<span class="t" style="left:98.3px;top:59.0px;font-size:12px;color:#000;transform:scaleX(0.7723);">これはアクティブなウインドウ用</span>
<span class="t" style="left:98.5px;top:89.0px;font-size:12px;color:#fff;transform:scaleX(0.9131);">すべて選択(<u>L</u>)</span>
<span class="t" style="left:350.9px;top:89.0px;font-size:12px;color:#fff;transform:scaleX(1.0033);">Ctrl+A</span>
<span class="t" style="left:98.5px;top:109.0px;font-size:12px;color:#000;transform:scaleX(0.9601);">選択の反転(<u>I</u>)</span>
<span class="t" style="left:318.7px;top:109.0px;font-size:12px;color:#000;transform:scaleX(1.0200);">Ctrl+Shift+A</span>
<span class="t" style="left:98.5px;top:128.5px;font-size:12px;color:#000;transform:scaleX(0.7832);">新しいタブで開く</span>
<span class="t" style="left:98.5px;top:148.5px;font-size:12px;color:#000;transform:scaleX(0.8364);">タブを複製</span>
<span class="t" style="left:98.5px;top:168.5px;font-size:12px;color:#000;transform:scaleX(0.8560);">新規タブ</span>
<span class="t" style="left:352.0px;top:168.5px;font-size:12px;color:#000;transform:scaleX(0.9909);">Ctrl+T</span>
<span class="t" style="left:98.5px;top:188.5px;font-size:12px;color:#000;transform:scaleX(0.8448);">選択項目を新しいタブで開く</span>
<span class="t" style="left:250.0px;top:188.5px;font-size:12px;color:#000;transform:scaleX(1.0072);">Shift+Enter / Shift+Ctrl+T</span>
<span class="t" style="left:98.5px;top:208.5px;font-size:12px;color:#000;transform:scaleX(0.8891);">特別に貼り付け</span>
<span class="t" style="left:98.5px;top:229.0px;font-size:12px;color:#000;transform:scaleX(0.7776);">パスのコピー</span>
<span class="t" style="left:99.3px;top:259.0px;font-size:12px;color:#000;transform:scaleX(0.9707);">Shell <u>M</u>enu</span>
<div class="big" style="left:103.5px;top:7px"><span class="p">(</span><span class="d">1</span><span class="p">)</span></div>
<div class="big" style="left:256.5px;top:63px;text-shadow:2px 2px 0 #808080"><span class="p">(</span><span class="d">2</span><span class="p">)</span></div>
<!-- black frame -->
<div class="a" style="left:0;top:0;width:750px;height:7.75px;background:#000"></div>
<div class="a" style="left:0;top:0;width:7.9px;height:750px;background:#000"></div>
<div class="a" style="left:8px;top:82.5px;width:1.5px;height:668px;background:#8c8c8c"></div>
<div class="a" style="left:7.9px;top:31px;width:1px;height:51.5px;background:#1a1a1a"></div>
</body></html>
